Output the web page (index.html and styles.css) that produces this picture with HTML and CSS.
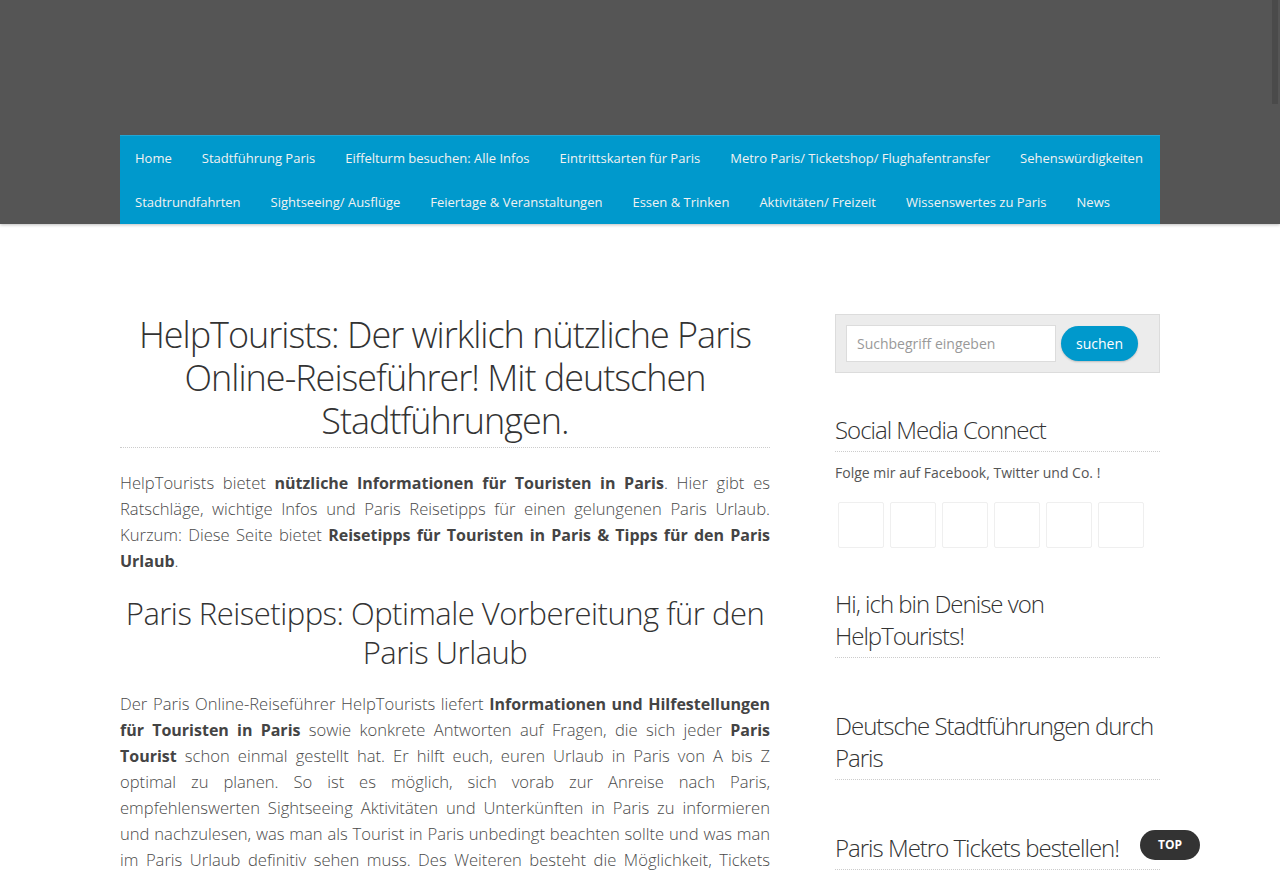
FILE: index.html
```html
<!DOCTYPE html>
<html lang="de">
<head>
<meta charset="utf-8">
<title>HelpTourists</title>
<link rel="stylesheet" href="styles.css">
</head>
<body>
<header class="site-header">
  <div class="header-top"></div>
  <nav class="main-nav">
    <ul class="menu">
      <li><a href="#">Home</a></li>
      <li><a href="#">Stadtführung Paris</a></li>
      <li><a href="#">Eiffelturm besuchen: Alle Infos</a></li>
      <li><a href="#">Eintrittskarten für Paris</a></li>
      <li><a href="#">Metro Paris/ Ticketshop/ Flughafentransfer</a></li>
      <li><a href="#">Sehenswürdigkeiten</a></li>
      <li><a href="#">Stadtrundfahrten</a></li>
      <li><a href="#">Sightseeing/ Ausflüge</a></li>
      <li><a href="#">Feiertage &amp; Veranstaltungen</a></li>
      <li><a href="#">Essen &amp; Trinken</a></li>
      <li><a href="#">Aktivitäten/ Freizeit</a></li>
      <li><a href="#">Wissenswertes zu Paris</a></li>
      <li><a href="#">News</a></li>
    </ul>
  </nav>
</header>
<div class="scroll-thumb"></div>

<div class="container">
  <main class="content">
    <h1 class="entry-title">HelpTourists: Der wirklich nützliche Paris Online-Reiseführer! Mit deutschen Stadtführungen.</h1>
    <p>HelpTourists bietet <strong>nützliche Informationen für Touristen in Paris</strong>. Hier gibt es Ratschläge, wichtige Infos und Paris Reisetipps für einen gelungenen Paris Urlaub. Kurzum: Diese Seite bietet <strong>Reisetipps für Touristen in Paris &amp; Tipps für den Paris Urlaub</strong>.</p>
    <h2 class="section-title">Paris Reisetipps: Optimale Vorbereitung für den Paris Urlaub</h2>
    <p>Der Paris Online-Reiseführer HelpTourists liefert <strong>Informationen und Hilfestellungen für Touristen in Paris</strong> sowie konkrete Antworten auf Fragen, die sich jeder <strong>Paris Tourist</strong> schon einmal gestellt hat. Er hilft euch, euren Urlaub in Paris von A bis Z optimal zu planen. So ist es möglich, sich vorab zur Anreise nach Paris, empfehlenswerten Sightseeing Aktivitäten und Unterkünften in Paris zu informieren und nachzulesen, was man als Tourist in Paris unbedingt beachten sollte und was man im Paris Urlaub definitiv sehen muss. Des Weiteren besteht die Möglichkeit, Tickets vorab online zu bestellen und sich so lange Wartezeiten zu ersparen.</p>
  </main>

  <aside class="sidebar">
    <section class="widget search-widget">
      <form class="search-form">
        <input class="search-field" type="text" placeholder="Suchbegriff eingeben">
        <button class="search-btn" type="button">suchen</button>
      </form>
    </section>

    <section class="widget social-widget">
      <h3 class="widget-title">Social Media Connect</h3>
      <p class="widget-text">Folge mir auf Facebook, Twitter und Co. !</p>
      <div class="social-icons">
        <span class="social-box"></span>
        <span class="social-box"></span>
        <span class="social-box"></span>
        <span class="social-box"></span>
        <span class="social-box"></span>
        <span class="social-box"></span>
      </div>
    </section>

    <section class="widget widget-empty">
      <h3 class="widget-title">Hi, ich bin Denise von HelpTourists!</h3>
    </section>

    <section class="widget widget-empty">
      <h3 class="widget-title">Deutsche Stadtführungen durch Paris</h3>
    </section>

    <section class="widget widget-empty">
      <h3 class="widget-title">Paris Metro Tickets bestellen!</h3>
    </section>
  </aside>
</div>

<a class="to-top" href="#">TOP</a>
</body>
</html>
```

FILE: styles.css
```css
* { box-sizing: border-box; }

html, body {
  margin: 0;
  padding: 0;
}

body {
  background: #fff;
  font-family: "Open Sans", "Liberation Sans", sans-serif;
  color: #555;
  overflow: hidden;
}

.site-header {
  background: #555555;
  box-shadow: 0 1px 3px rgba(0,0,0,0.25);
}

.header-top {
  height: 135px;
}

.main-nav {
  width: 1040px;
  margin: 0 auto;
  background: #0099cc;
  border-top: 1px solid #22a6d4;
}

.menu {
  list-style: none;
  margin: 0;
  padding: 0;
  display: flex;
  flex-wrap: wrap;
}

.menu a {
  display: block;
  padding: 0 15px;
  height: 44px;
  line-height: 44px;
  font-size: 13px;
  color: #f2f2f2;
  text-decoration: none;
}

.scroll-thumb {
  position: fixed;
  top: 0;
  right: 2px;
  width: 6px;
  height: 104px;
  background: #4a4a4a;
}

.container {
  width: 1040px;
  margin: 89px auto 0;
  display: flex;
  justify-content: space-between;
  align-items: flex-start;
}

.content {
  width: 650px;
}

.entry-title {
  margin: 0 0 22px;
  padding-bottom: 5px;
  font-size: 36px;
  line-height: 43px;
  font-weight: 300;
  letter-spacing: -1px;
  color: #333;
  text-align: center;
  border-bottom: 1px dotted #ccc;
}

.section-title {
  margin: 20px 0 19px;
  font-size: 31px;
  line-height: 39px;
  font-weight: 300;
  letter-spacing: -0.5px;
  color: #333;
  text-align: center;
}

.content p {
  margin: 0;
  font-size: 16.6px;
  line-height: 26px;
  font-weight: 300;
  text-align: justify;
  color: #4a4a4a;
}

.content strong {
  font-size: 16px;
  font-weight: 700;
  color: #444;
}

.sidebar {
  width: 325px;
}

.widget {
  margin-bottom: 41px;
}

.social-widget {
  margin-bottom: 40px;
}

.widget-empty {
  margin-bottom: 52px;
}

.search-widget {
  background: #ececec;
  border: 1px solid #dcdcdc;
  padding: 10px;
  height: 59px;
  margin-top: 1px;
}

.search-form {
  display: flex;
  align-items: center;
  gap: 5px;
}

.search-field {
  width: 210px;
  height: 37px;
  margin: 0;
  border: 1px solid #dcdcdc;
  background: #fff;
  padding: 0 10px;
  font-family: "Open Sans", "Liberation Sans", sans-serif;
  font-size: 14px;
  color: #555;
  outline: none;
}

.search-field::placeholder {
  color: #999;
}

.search-btn {
  width: 77px;
  height: 35px;
  border: none;
  border-radius: 18px;
  background: #0099cc;
  color: #fff;
  font-family: "Open Sans", "Liberation Sans", sans-serif;
  font-size: 14px;
  padding: 0;
  box-shadow: 0 1px 2px rgba(0,0,0,0.2);
}

.widget-title {
  margin: 0;
  padding-bottom: 5px;
  font-size: 24px;
  line-height: 32px;
  font-weight: 300;
  letter-spacing: -1px;
  color: #333;
  border-bottom: 1px dotted #ccc;
}

.widget-text {
  margin: 10px 0 0;
  font-size: 14px;
  line-height: 22px;
  color: #555;
}

.social-icons {
  display: flex;
  gap: 6px;
  margin-top: 18px;
  padding-left: 3px;
}

.social-box {
  width: 46px;
  height: 46px;
  border: 1px solid #efefef;
  border-radius: 2px;
  background: #fff;
}

.to-top {
  position: fixed;
  left: 1140px;
  top: 830px;
  width: 60px;
  height: 30px;
  border-radius: 15px;
  background: #333;
  color: #fff;
  font-size: 12px;
  font-weight: 700;
  line-height: 30px;
  text-align: center;
  text-decoration: none;
}
```
